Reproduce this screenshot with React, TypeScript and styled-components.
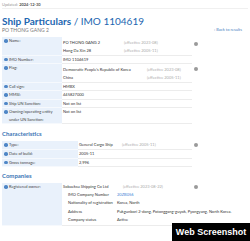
import React from "react";
import styled, { createGlobalStyle } from "styled-components";

const Global = createGlobalStyle`
  html, body { margin: 0; padding: 0; background: #fff; }
  body { font-family: Lato, "Open Sans", sans-serif; color: #333; }
  * { box-sizing: border-box; }
`;

const Page = styled.div`
  position: relative;
  width: 250px;
  height: 241px;
  overflow: hidden;
  padding: 2px 0 0 2px;
`;

const Updated = styled.div`
  font-size: 4px;
  line-height: 5px;
  color: #999;
  padding-bottom: 1px;
  border-bottom: 1px solid #f0f0f0;
  margin-right: 2px;
  b { color: #555; font-weight: 700; }
`;

const Header = styled.div`
  display: flex;
  justify-content: space-between;
  align-items: flex-end;
  width: 240px;
  margin-top: 6px;
`;

const Title = styled.h1`
  margin: 0;
  font-size: 10px;
  line-height: 12px;
  font-weight: 400;
  color: #2266b0;
  b { font-weight: 700; }
`;

const Subtitle = styled.div`
  font-size: 5px;
  line-height: 6px;
  color: #777;
  letter-spacing: 0.05px;
`;

const Back = styled.a`
  font-size: 4px;
  line-height: 5px;
  color: #4a7fc1;
  margin-bottom: 1px;
`;

const Section = styled.h2<{ $top: number }>`
  margin: 0;
  font-size: 6px;
  line-height: 8px;
  font-weight: 700;
  color: #3c76b6;
  padding: ${(p) => p.$top}px 0 3px 0;
`;

const TableWrap = styled.div<{ $top?: number }>`
  display: flex;
  align-items: flex-start;
  margin-top: ${(p) => p.$top ?? 0}px;
`;

const Table = styled.div<{ $label: number }>`
  width: 190px;
  display: grid;
  grid-template-columns: ${(p) => p.$label}px 1fr;
`;

const Label = styled.div`
  background: #e9f1fb;
  border-bottom: 1px solid #f6f9fd;
  font-size: 4px;
  line-height: 7.5px;
  color: #444;
  padding: 0 1px 0 2px;
  display: flex;
  gap: 1.5px;
`;

const Value = styled.div`
  border-bottom: 1px solid #ececec;
  font-size: 4px;
  line-height: 7.5px;
  color: #333;
  padding-left: 1px;
`;

const Entries = styled.div`
  padding-top: 1.5px;
`;

const Entry = styled.div`
  display: flex;
  line-height: 8px;
`;

const Main = styled.span<{ $w: number }>`
  width: ${(p) => p.$w}px;
  flex: none;
`;

const Eff = styled.span`
  color: #aaa;
`;

const Icon = styled.span`
  flex: none;
  width: 3.5px;
  height: 3.5px;
  border-radius: 50%;
  background: #4f86c6;
  margin-top: 2px;
`;

const Side = styled.div`
  width: 8px;
  display: grid;
  justify-items: center;
`;

const Hist = styled.span<{ $top: number }>`
  width: 4px;
  height: 4px;
  border-radius: 50%;
  background: #9a9a9a;
  margin-top: ${(p) => p.$top}px;
`;

const Sub = styled.div`
  display: grid;
  grid-template-columns: 49px 1fr;
  padding-left: 5px;
  line-height: 8.4px;
  white-space: nowrap;
`;

const Link = styled.span`
  color: #3d7fd6;
`;

const Badge = styled.div`
  position: absolute;
  right: 0;
  bottom: 0;
  width: 78px;
  height: 18px;
  background: #000;
  color: #fff;
  font-family: "Liberation Sans", Arial, sans-serif;
  font-weight: 700;
  font-size: 9px;
  display: flex;
  align-items: center;
  justify-content: center;
`;

function Row({ label, children }: { label: React.ReactNode; children: React.ReactNode }) {
  return (
    <>
      <Label>
        <Icon />
        <span>{label}</span>
      </Label>
      <Value>{children}</Value>
    </>
  );
}

export default function App() {
  return (
    <Page>
      <Global />
      <Updated>
        Updated: <b>2024-12-30</b>
      </Updated>
      <Header>
        <div>
          <Title>
            <b>Ship Particulars</b> / IMO 1104619
          </Title>
          <Subtitle>PO THONG GANG 2</Subtitle>
        </div>
        <Back>‹ Back to results</Back>
      </Header>

      <TableWrap $top={4}>
        <Table $label={60}>
          <Row label="Name:">
            <Entries>
              <Entry>
                <Main $w={61}>PO THONG GANG 2</Main>
                <Eff>(effective 2023-08)</Eff>
              </Entry>
              <Entry>
                <Main $w={61}>Hong Da Xin 28</Main>
                <Eff>(effective 2005-11)</Eff>
              </Entry>
            </Entries>
          </Row>
          <Row label="IMO Number:">IMO 1104619</Row>
          <Row label="Flag:">
            <Entries>
              <Entry>
                <Main $w={84}>Democratic People's Republic of Korea</Main>
                <Eff>(effective 2023-08)</Eff>
              </Entry>
              <Entry>
                <Main $w={84}>China</Main>
                <Eff>(effective 2005-11)</Eff>
              </Entry>
            </Entries>
          </Row>
          <Row label="Call sign:">HMBX</Row>
          <Row label="MMSI:">445827000</Row>
          <Row label="Ship UN Sanction:">Not on list</Row>
          <Row label={<>Owning/operating entity<br />under UN Sanction:</>}>Not on list</Row>
        </Table>
        <Side>
          <Hist $top={5} />
          <Hist $top={21} />
        </Side>
      </TableWrap>

      <Section $top={6}>Characteristics</Section>
      <TableWrap>
        <Table $label={76}>
          <Row label="Type:">
            <Entry>
              <Main $w={43}>General Cargo Ship</Main>
              <Eff>(effective 2005-11)</Eff>
            </Entry>
          </Row>
          <Row label="Date of build:">2005-11</Row>
          <Row label="Gross tonnage:">2,996</Row>
        </Table>
        <Side>
          <Hist $top={2} />
        </Side>
      </TableWrap>

      <Section $top={5}>Companies</Section>
      <TableWrap>
        <Table $label={60}>
          <Row label="Registered owner:">
            <Entry>
              <Main $w={60}>Sobaeksu Shipping Co Ltd</Main>
              <Eff>(effective 2023-08-22)</Eff>
            </Entry>
            <Sub>
              <span>IMO Company Number</span>
              <Link>20ZB056</Link>
              <span>Nationality of registration</span>
              <span>Korea, North</span>
              <span>Address</span>
              <span>Pukgunbori 2-dong, Potonggang-guyok, Pyongyang, North Korea.</span>
              <span>Company status</span>
              <span>Active</span>
            </Sub>
          </Row>
        </Table>
        <Side>
          <Hist $top={2} />
        </Side>
      </TableWrap>

      <Badge>Web Screenshot</Badge>
    </Page>
  );
}
